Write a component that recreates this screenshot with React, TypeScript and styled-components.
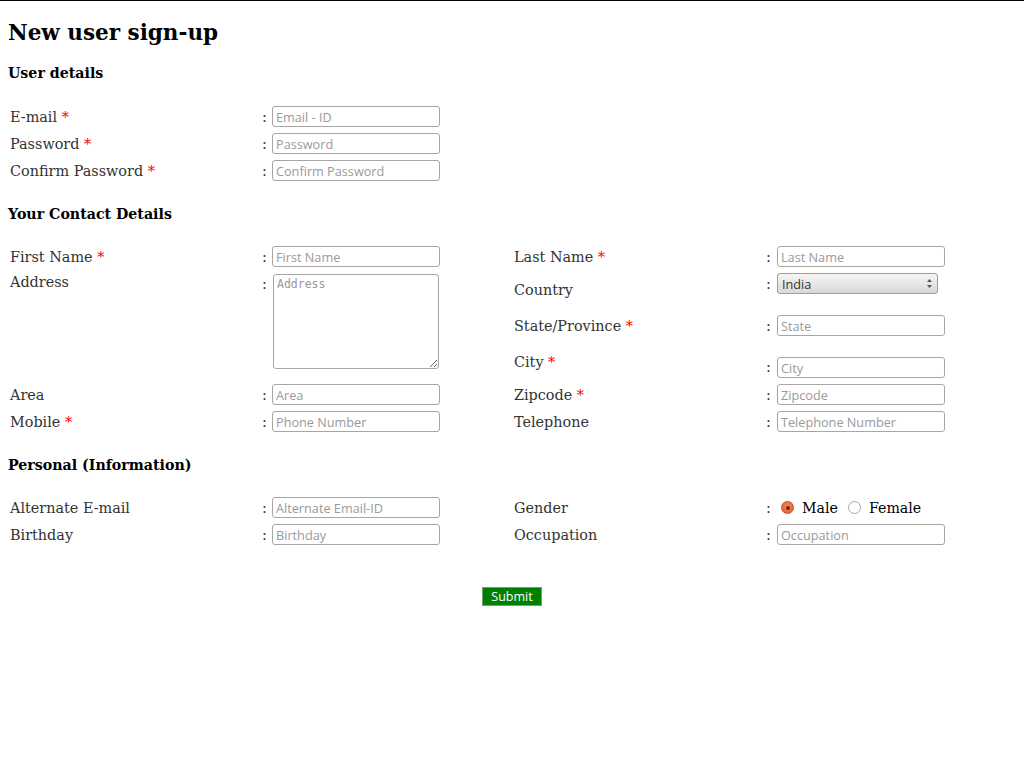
import React from "react";
import styled, { createGlobalStyle } from "styled-components";

const Global = createGlobalStyle`
  html { border-top: 1px solid #000; background: #fff; }
  body { margin: 0; font-family: "DejaVu Serif", serif; color: #333; }
  * { box-sizing: border-box; }
`;

const Page = styled.div`
  padding: 8px;
`;

const Title = styled.h2`
  margin: 10px 0 0 0;
  font-size: 21.5px;
  line-height: 28px;
  font-weight: bold;
  color: #000;
`;

const SectionTitle = styled.h4<{ $mt: number }>`
  margin: ${(p) => p.$mt}px 0 0 0;
  font-size: 14.2px;
  line-height: 20px;
  font-weight: bold;
  color: #000;
`;

const FormGrid = styled.div<{ $mt: number; $rows: string }>`
  margin-top: ${(p) => p.$mt}px;
  display: grid;
  grid-template-columns: 252px 11px 241px 252px 12px 1fr;
  grid-template-rows: ${(p) => p.$rows};
`;

type Align = "start" | "center" | "end";

const Label = styled.div<{ $align?: Align; $span?: number; $pad?: number }>`
  padding-left: 2px;
  font-size: 14.4px;
  line-height: 18px;
  color: #333;
  align-self: ${(p) => p.$align || "center"};
  padding-top: ${(p) => p.$pad || 0}px;
  ${(p) => (p.$span ? `grid-row: span ${p.$span};` : "")}
`;

const Req = styled.span`
  color: #f00;
`;

const Colon = styled.div<{ $align?: Align; $span?: number; $pad?: number; $padB?: number }>`
  padding-left: 2px;
  font-size: 14.4px;
  line-height: 18px;
  color: #333;
  align-self: ${(p) => p.$align || "center"};
  padding-top: ${(p) => p.$pad || 0}px;
  padding-bottom: ${(p) => p.$padB || 0}px;
  ${(p) => (p.$span ? `grid-row: span ${p.$span};` : "")}
`;

const Field = styled.div<{ $align?: Align; $span?: number; $mt?: number; $mb?: number }>`
  align-self: ${(p) => p.$align || "center"};
  margin-top: ${(p) => p.$mt || 0}px;
  margin-bottom: ${(p) => p.$mb || 0}px;
  display: flex;
  align-items: center;
  ${(p) => (p.$span ? `grid-row: span ${p.$span};` : "")}
`;

const TextInput = styled.input`
  margin-left: 1px;
  width: 168px;
  height: 21px;
  border: 1px solid #a8a6a2;
  border-radius: 3px;
  padding: 0 3px;
  font-family: "Open Sans", "DejaVu Sans", sans-serif;
  font-size: 12.7px;
  color: #333;
  background: #fff;
  outline: none;
  &::placeholder {
    color: #9a9a9a;
  }
`;

const TextArea = styled.textarea`
  margin-left: 2px;
  width: 166px;
  height: 95px;
  border: 1px solid #a8a6a2;
  border-radius: 3px;
  padding: 2px 3px;
  font-family: "DejaVu Sans Mono", monospace;
  font-size: 11.5px;
  line-height: 14px;
  color: #333;
  resize: both;
  outline: none;
  &::placeholder {
    color: #9a9a9a;
  }
`;

const SelectWrap = styled.div`
  position: relative;
  margin-left: 1px;
  width: 161px;
  height: 21px;
`;

const Select = styled.select`
  appearance: none;
  width: 100%;
  height: 100%;
  border: 1px solid #a09e9a;
  border-radius: 3px;
  padding: 0 0 0 4px;
  background: linear-gradient(#f6f6f5, #d9d8d6);
  font-family: "Open Sans", "DejaVu Sans", sans-serif;
  font-size: 12.7px;
  color: #333;
  outline: none;
`;

const Arrows = styled.svg`
  position: absolute;
  right: 5px;
  top: 5px;
  pointer-events: none;
`;

const RadioGroup = styled.div`
  display: flex;
  align-items: center;
  margin-left: 5px;
  font-family: "DejaVu Serif", serif;
  font-size: 14.2px;
  color: #000;
`;

const RadioDot = styled.span<{ $checked?: boolean }>`
  display: inline-block;
  width: 13px;
  height: 13px;
  border-radius: 50%;
  margin-right: 8px;
  position: relative;
  ${(p) =>
    p.$checked
      ? `background: radial-gradient(circle at 50% 40%, #f08a60, #dd5a2a);
         border: 1px solid #c8522a;`
      : `background: #fff; border: 1px solid #a8a8a8;`}
  &::after {
    content: "";
    display: ${(p) => (p.$checked ? "block" : "none")};
    position: absolute;
    left: 50%;
    top: 50%;
    width: 4px;
    height: 4px;
    margin: -2px 0 0 -2px;
    border-radius: 50%;
    background: #6b2a12;
  }
`;

const RadioText = styled.span`
  margin-right: 10px;
`;

const SubmitRow = styled.div`
  margin-top: 39px;
  display: flex;
  justify-content: center;
`;

const SubmitButton = styled.button`
  width: 60px;
  height: 19px;
  padding: 0;
  background: #008000;
  border: 1px solid #7a9a7a;
  color: #fff;
  font-family: "Open Sans", "DejaVu Sans", sans-serif;
  font-size: 12.5px;
  line-height: 17px;
`;

const Empty = styled.div``;

function Row({ label, req, placeholder }: { label: string; req?: boolean; placeholder: string }) {
  return (
    <>
      <Label>
        {label} {req && <Req>*</Req>}
      </Label>
      <Colon>:</Colon>
      <Field>
        <TextInput placeholder={placeholder} />
      </Field>
    </>
  );
}

export default function App() {
  return (
    <Page>
      <Global />
      <Title>New user sign-up</Title>
      <SectionTitle $mt={16}>User details</SectionTitle>
      <FormGrid $mt={20} $rows="27px 27px 27px">
        <Row label="E-mail" req placeholder="Email - ID" />
        <Empty />
        <Empty />
        <Empty />
        <Row label="Password" req placeholder="Password" />
        <Empty />
        <Empty />
        <Empty />
        <Row label="Confirm Password" req placeholder="Confirm Password" />
        <Empty />
        <Empty />
        <Empty />
      </FormGrid>

      <SectionTitle $mt={20}>Your Contact Details</SectionTitle>
      <FormGrid $mt={19} $rows="27px 39px 33px 39px 27px 27px">
        <Row label="First Name" req placeholder="First Name" />
        <Row label="Last Name" req placeholder="Last Name" />

        <Label $align="start" $span={3} $pad={3}>
          Address
        </Label>
        <Colon $align="start" $span={3} $pad={5}>
          :
        </Colon>
        <Field $align="start" $span={3} $mt={4}>
          <TextArea placeholder="Address" />
        </Field>
        <Label>Country</Label>
        <Colon $align="start" $pad={5}>
          :
        </Colon>
        <Field $align="start" $mt={3}>
          <SelectWrap>
            <Select defaultValue="India">
              <option>India</option>
              <option>USA</option>
              <option>UK</option>
            </Select>
            <Arrows width="7" height="11" viewBox="0 0 7 11">
              <path d="M3.5 1 L6 4 H1 Z" fill="#555" />
              <path d="M3.5 10 L6 7 H1 Z" fill="#555" />
            </Arrows>
          </SelectWrap>
        </Field>

        <Label>
          State/Province <Req>*</Req>
        </Label>
        <Colon>:</Colon>
        <Field>
          <TextInput placeholder="State" />
        </Field>

        <Label $align="start" $pad={11}>
          City <Req>*</Req>
        </Label>
        <Colon $align="end" $padB={5}>
          :
        </Colon>
        <Field $align="end" $mb={3}>
          <TextInput placeholder="City" />
        </Field>

        <Row label="Area" placeholder="Area" />
        <Row label="Zipcode" req placeholder="Zipcode" />
        <Row label="Mobile" req placeholder="Phone Number" />
        <Row label="Telephone" placeholder="Telephone Number" />
      </FormGrid>

      <SectionTitle $mt={20}>Personal (Information)</SectionTitle>
      <FormGrid $mt={19} $rows="27px 27px">
        <Row label="Alternate E-mail" placeholder="Alternate Email-ID" />
        <Label>Gender</Label>
        <Colon>:</Colon>
        <Field>
          <RadioGroup>
            <RadioDot $checked />
            <RadioText>Male</RadioText>
            <RadioDot />
            <RadioText>Female</RadioText>
          </RadioGroup>
        </Field>
        <Row label="Birthday" placeholder="Birthday" />
        <Row label="Occupation" placeholder="Occupation" />
      </FormGrid>

      <SubmitRow>
        <SubmitButton>Submit</SubmitButton>
      </SubmitRow>
    </Page>
  );
}
